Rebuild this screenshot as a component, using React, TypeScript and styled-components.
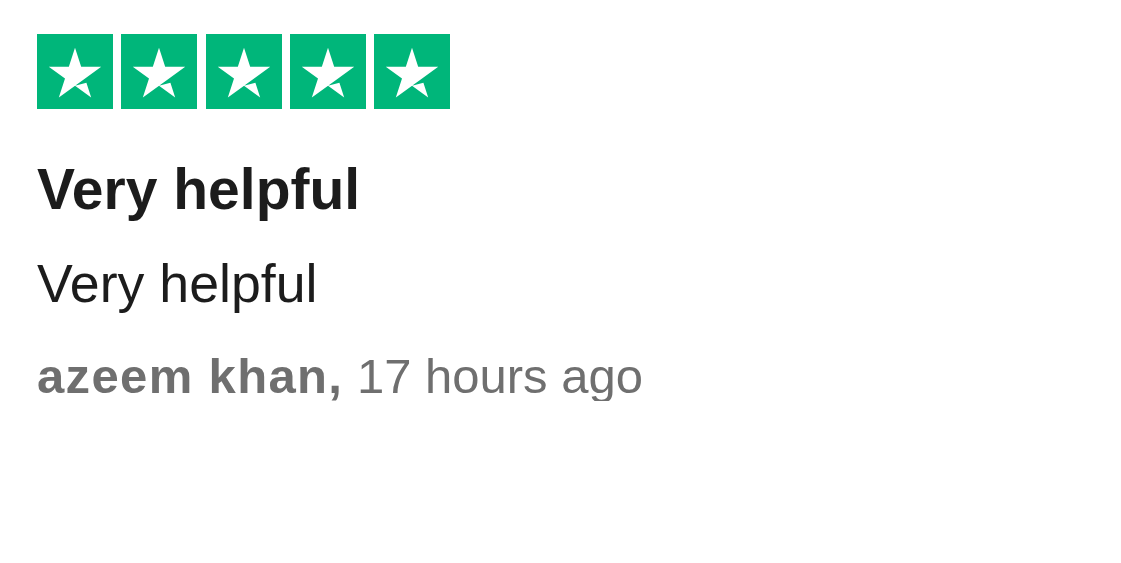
import React from "react";
import styled, { createGlobalStyle } from "styled-components";

const GlobalStyle = createGlobalStyle`
  html, body {
    margin: 0;
    padding: 0;
    background: #fff;
  }
  body {
    font-family: "Liberation Sans", Arial, Helvetica, sans-serif;
  }
`;

const Review = styled.article`
  padding: 34px 0 0 37px;
  display: flex;
  flex-direction: column;
`;

const Stars = styled.div`
  display: flex;
  gap: 8.25px;
`;

const StarBox = styled.div<{ $filled?: boolean }>`
  width: 76px;
  height: 75px;
  background: ${(p) => (p.$filled ? "#00b67a" : "#dcdce6")};
  display: flex;
  svg {
    width: 100%;
    height: 100%;
    display: block;
  }
`;

const Title = styled.h2`
  margin: 51.75px 0 0;
  font-size: 57px;
  line-height: 1;
  font-weight: 700;
  color: #1c1c1c;
`;

const Body = styled.p`
  margin: 39.4px 0 0;
  font-size: 53.7px;
  line-height: 1;
  font-weight: 400;
  color: #1c1c1c;
`;

const Meta = styled.p`
  margin: 41.3px 0 0;
  font-size: 49px;
  line-height: 1;
  color: #6f6f6f;
`;

const Author = styled.span`
  font-weight: 700;
  letter-spacing: 1.35px;
`;

const Star = () => (
  <svg viewBox="0 -1.5 96 96" aria-hidden="true">
    <path
      fill="#fff"
      d="M48 64.73L62.6 61.03L68.7 79.83L48 64.73ZM81.6 40.43H55.9L48 16.23L40.1 40.43H14.4L35.2 55.43L27.3 79.63L48.1 64.63L60.9 55.43L81.6 40.43Z"
    />
  </svg>
);

type ReviewProps = {
  rating: number;
  title: string;
  text: string;
  author: string;
  when: string;
};

const ReviewCard: React.FC<ReviewProps> = ({ rating, title, text, author, when }) => (
  <Review>
    <Stars>
      {[1, 2, 3, 4, 5].map((n) => (
        <StarBox key={n} $filled={n <= rating}>
          <Star />
        </StarBox>
      ))}
    </Stars>
    <Title>{title}</Title>
    <Body>{text}</Body>
    <Meta>
      <Author>{author},</Author> {when}
    </Meta>
  </Review>
);

export default function App() {
  return (
    <>
      <GlobalStyle />
      <ReviewCard
        rating={5}
        title="Very helpful"
        text="Very helpful"
        author="azeem khan"
        when="17 hours ago"
      />
    </>
  );
}
